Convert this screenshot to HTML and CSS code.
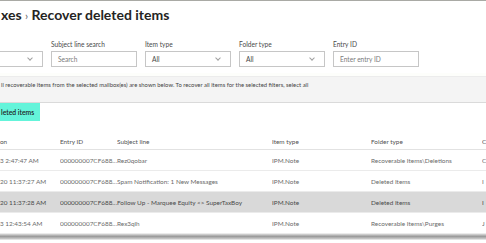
FILE: index.html
```html
<!DOCTYPE html>
<html>
<head>
<meta charset="utf-8">
<link rel="stylesheet" href="styles.css">
</head>
<body>
<div class="page">
  <h1 class="title">xes <span class="sep">›</span> Recover deleted items</h1>
  <div class="filters">
    <div class="field f0">
      <div class="label">&nbsp;</div>
      <div class="input select"><span></span><span class="chev"></span></div>
    </div>
    <div class="field">
      <div class="label">Subject line search</div>
      <div class="input"><span class="ph">Search</span></div>
    </div>
    <div class="field">
      <div class="label">Item type</div>
      <div class="input select"><span>All</span><span class="chev"></span></div>
    </div>
    <div class="field">
      <div class="label">Folder type</div>
      <div class="input select"><span>All</span><span class="chev"></span></div>
    </div>
    <div class="field">
      <div class="label">Entry ID</div>
      <div class="input"><span class="ph">Enter entry ID</span></div>
    </div>
  </div>
  <div class="info">ll recoverable items from the selected mailbox(es) are shown below. To recover all items for the selected filters, select all</div>
  <div class="actions"><button class="primary">leted items</button></div>
  <div class="table">
    <div class="row head">
      <div>on</div><div>Entry ID</div><div>Subject line</div><div>Item type</div><div>Folder type</div><div>C</div>
    </div>
    <div class="row">
      <div>3 2:47:47 AM</div><div>000000007CF688...</div><div>Rez0qobar</div><div>IPM.Note</div><div>Recoverable Items\Deletions</div><div>C</div>
    </div>
    <div class="row">
      <div>20 11:37:27 AM</div><div>000000007CF688...</div><div>Spam Notification: 1 New Messages</div><div>IPM.Note</div><div>Deleted Items</div><div>I</div>
    </div>
    <div class="row sel">
      <div>20 11:37:28 AM</div><div>000000007CF688...</div><div>Follow Up - Marquee Equity &lt;&gt; SuperTaxBoy</div><div>IPM.Note</div><div>Deleted Items</div><div>I</div>
    </div>
    <div class="row">
      <div>3 12:43:54 AM</div><div>000000007CF688...</div><div>Rex3qlh</div><div>IPM.Note</div><div>Recoverable Items\Purges</div><div>J</div>
    </div>
  </div>
  <div class="shadow"></div>
</div>
</body>
</html>
```

FILE: styles.css
```css
html, body {
  margin: 0;
  padding: 0;
  background: #ffffff;
}
body {
  width: 486px;
  height: 243px;
  overflow: hidden;
  font-family: Lato, "Open Sans", sans-serif;
  color: #323130;
}
.page {
  border-top: 1px solid #a9aaa5;
  background: #fdfefb;
}
.title {
  margin: 0;
  height: 29px;
  padding: 4px 0 0 1px;
  box-sizing: border-box;
  font-size: 14px;
  font-weight: 700;
  line-height: 20px;
  color: #252423;
  background: #ffffff;
}
.sep {
  font-weight: 400;
  color: #605e5c;
  font-size: 11px;
}
.filters {
  display: flex;
  gap: 8px;
  padding: 10px 0 0 0;
  height: 43px;
  box-sizing: border-box;
  background: #ffffff;
  margin-left: -43px;
}
.field {
  width: 86px;
  display: flex;
  flex-direction: column;
}
.label {
  font-size: 6.6px;
  line-height: 8px;
  color: #4a4a4a;
  height: 11px;
}
.input {
  height: 16px;
  border: 1px solid #c6c6c6;
  box-sizing: border-box;
  display: flex;
  align-items: center;
  justify-content: space-between;
  padding: 0 6px;
  font-size: 6.6px;
  color: #444;
  background: #fff;
}
.ph { color: #7a7a7a; }
.chev {
  width: 3px;
  height: 3px;
  border-right: 1px solid #a0a0a0;
  border-bottom: 1px solid #a0a0a0;
  transform: rotate(45deg);
  margin: -2px 4px 0 0;
}
.info {
  margin-top: 3px;
  border-top: 1px solid #ececec;
  background: #f4f4f4;
  border-bottom: 1px solid #dadada;
  height: 27px;
  box-sizing: border-box;
  padding: 4px 0 0 1px;
  font-size: 5.9px;
  line-height: 8px;
  color: #444;
  white-space: nowrap;
}
.actions {
  height: 30px;
  background: #ffffff;
}
.primary {
  display: block;
  border: 0;
  margin: 0;
  width: 40px;
  height: 18px;
  padding: 0 0 0 1px;
  text-align: left;
  background: #64f4da;
  color: #1e1e1e;
  font-family: Lato, sans-serif;
  font-size: 6.8px;
  font-weight: 600;
}
.table {
  background: #ffffff;
}
.row {
  display: grid;
  grid-template-columns: 60px 57px 155px 99px 111px 1fr;
  height: 21px;
  align-items: center;
  border-bottom: 1px solid #ebebeb;
  box-sizing: border-box;
  font-size: 6.4px;
  color: #6a6a6a;
  white-space: nowrap;
}
.row > div { overflow: hidden; }
.row.head {
  height: 17px;
  color: #505050;
  border-bottom: 1px solid #e2e2e2;
}
.row.sel {
  background: #d9d9d9;
  color: #4a4a4a;
}
.shadow {
  height: 6px;
  background: linear-gradient(#d8d8d8, #9a9a9a 40%, #c8c8c8 80%, #f4f4f4);
}
```
